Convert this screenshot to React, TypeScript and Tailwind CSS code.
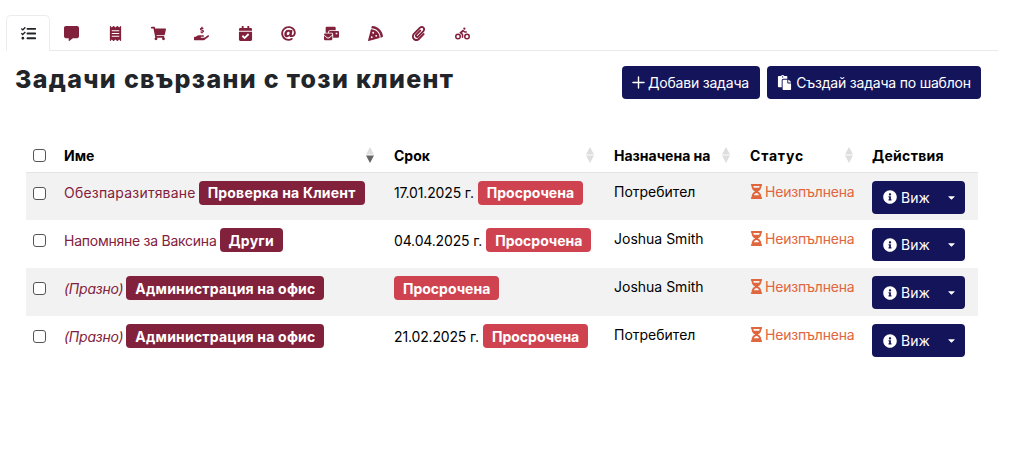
import {
  FaTasks,
  FaCommentAlt,
  FaReceipt,
  FaShoppingCart,
  FaHandHoldingUsd,
  FaCalendarCheck,
  FaAt,
  FaMailBulk,
  FaPizzaSlice,
  FaPaperclip,
  FaBiking,
  FaPaste,
  FaHourglassHalf,
  FaInfoCircle,
  FaCaretDown,
} from "react-icons/fa";
import { Plus } from "lucide-react";

const tabs = [FaCommentAlt, FaReceipt, FaShoppingCart, FaHandHoldingUsd, FaCalendarCheck, FaAt, FaMailBulk, FaPizzaSlice, FaPaperclip, FaBiking];

const rows = [
  { name: "Обезпаразитяване", nameClass: "tracking-[0.2px]", tag: "Проверка на Клиент", date: "17.01.2025 г.", user: "Потребител" },
  { name: "Напомняне за Ваксина", nameClass: "tracking-[-0.25px]", tag: "Други", date: "04.04.2025 г.", user: "Joshua Smith" },
  { name: "(Празно)", nameClass: "italic tracking-[-0.25px]", tag: "Администрация на офис", date: "", user: "Joshua Smith" },
  { name: "(Празно)", nameClass: "italic tracking-[-0.25px]", tag: "Администрация на офис", date: "21.02.2025 г.", user: "Потребител" },
];

function Sort({ active }: { active?: boolean }) {
  return (
    <svg viewBox="0 0 8 16" className="w-[8px] h-[16px] shrink-0">
      <path d="M4 0 8 7.5H0Z" fill="#dedede" />
      <path d="M0 8.5H8L4 16Z" fill={active ? "#666666" : "#dedede"} />
    </svg>
  );
}

function Box() {
  return <input type="checkbox" className="w-[13px] h-[13px] block appearance-none rounded-[3px] border border-[#555] bg-white" />;
}

export default function App() {
  return (
    <div lang="bg" className="w-[1024px] h-[451px] bg-white overflow-hidden font-['Inter',sans-serif] text-[#212529] pl-[6px] pr-[26px] pt-[15px]">
      {/* Tabs */}
      <div className="flex h-[36px] border-b border-[#e9e9e9] text-[#82213c]">
        <div className="h-[36px] px-[13.5px] flex items-center bg-white border border-[#ececec] border-b-white rounded-t-[5px] text-[#212529]">
          <FaTasks className="h-[15px] w-auto" />
        </div>
        <div className="flex">
          {tabs.map((Icon, i) => (
            <div key={i} className="h-[36px] px-[14.2px] flex items-center">
              <Icon className="h-[15px] w-auto" />
            </div>
          ))}
        </div>
      </div>

      {/* Title + buttons */}
      <div className="flex justify-between items-start pl-[9px] pr-[17px] pt-[15px]">
        <h1 className="text-[25px] leading-[30px] font-extrabold tracking-[1.33px] text-[#212529] -mt-[2px]">Задачи свързани с този клиент</h1>
        <div className="flex gap-[7px]">
          <button className="h-[33px] w-[138px] flex items-center pl-[7px] rounded-[4px] bg-[#14145a] text-white text-[14px] tracking-[-0.2px]">
            <Plus size={19} strokeWidth={1.8} />
            Добави задача
          </button>
          <button className="h-[33px] w-[214px] flex items-center justify-center gap-[4px] rounded-[4px] bg-[#14145a] text-white text-[14px] tracking-[-0.2px]">
            <FaPaste className="h-[15px] w-auto" />
            Създай задача по шаблон
          </button>
        </div>
      </div>

      {/* Table */}
      <div className="pl-[20px] pr-[20px] pt-[40px]">
        <table className="w-[952px] table-fixed border-collapse text-[14px] text-black">
          <thead>
            <tr className="h-[33px] border-b border-[#e4e4e4] font-bold text-left">
              <th className="w-[30px] pl-[7px]"><Box /></th>
              <th className="w-[330px] pl-[8px] pr-[12px]">
                <div className="flex justify-between items-center">Име <Sort active /></div>
              </th>
              <th className="w-[220px] pl-[8px] pr-[12px]">
                <div className="flex justify-between items-center">Срок <Sort /></div>
              </th>
              <th className="w-[136px] pl-[8px] pr-[12px]">
                <div className="flex justify-between items-center">Назначена на <Sort /></div>
              </th>
              <th className="w-[122px] pl-[8px] pr-[11px]">
                <div className="flex justify-between items-center"><span className="tracking-[0.8px]">Статус</span> <Sort /></div>
              </th>
              <th className="pl-[8px] font-bold tracking-[0.3px]">Действия</th>
            </tr>
          </thead>
          <tbody>
            {rows.map((r, i) => (
              <tr key={i} className={`h-[48px] ${i % 2 === 0 ? "bg-[#f2f2f2]" : "bg-white"}`}>
                <td className="pl-[7px] align-top pt-[14px]"><Box /></td>
                <td className="pl-[8px] align-top pt-[8px]">
                  <div className="flex items-center gap-[3px]">
                    <span className={`text-[#82213c] ${r.nameClass}`}>{r.name}</span>
                    <span className="h-[24px] px-[9px] flex items-center rounded-[4px] bg-[#82213c] text-white font-bold tracking-[0.2px]">{r.tag}</span>
                  </div>
                </td>
                <td className="pl-[8px] align-top pt-[8px]">
                  <div className="flex items-center gap-[4px]">
                    {r.date && <span className="tracking-[-0.15px]">{r.date}</span>}
                    <span className="h-[24px] px-[9px] flex items-center rounded-[4px] bg-[#cf4351] text-white font-bold">Просрочена</span>
                  </div>
                </td>
                <td className="pl-[8px] align-top pt-[8px]">{r.user}</td>
                <td className="pl-[8px] align-top pt-[8px]">
                  <span className="flex items-center gap-[1px] -ml-[1px] text-[#e0663e] tracking-[-0.2px]">
                    <FaHourglassHalf className="h-[15px] w-auto" />
                    Неизпълнена
                  </span>
                </td>
                <td className="pl-[8px] align-top pt-[8px]">
                  <button className="h-[33px] w-[93px] flex items-center rounded-[4px] bg-[#14145a] text-white text-[14px] pl-[11px]">
                    <FaInfoCircle className="w-[14px] h-[14px] mr-[4px]" />
                    Виж
                    <FaCaretDown className="w-[11px] h-[11px] ml-auto mr-[8px]" />
                  </button>
                </td>
              </tr>
            ))}
          </tbody>
        </table>
      </div>
    </div>
  );
}
